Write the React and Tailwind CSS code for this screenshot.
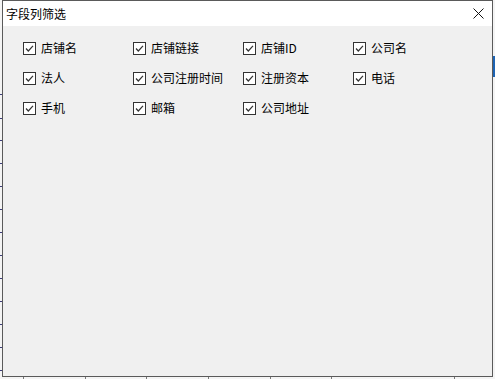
import React from 'react';

// Campos exibidos no diálogo, em ordem de linha
const campos = [
  '店铺名', '店铺链接', '店铺ID', '公司名',
  '法人', '公司注册时间', '注册资本', '电话',
  '手机', '邮箱', '公司地址',
];

const Caixa = () => (
  <svg width="13" height="13" viewBox="0 0 13 13" className="shrink-0">
    <rect x="0.5" y="0.5" width="12" height="12" fill="#ffffff" stroke="#333333" />
    <path d="M3 6.5 L5.3 9 L10 3.8" fill="none" stroke="#333333" strokeWidth="1.2" />
  </svg>
);

const Campo = ({ nome }) => (
  <label className="flex items-center gap-[5px] h-[30px] text-[12px] text-black">
    <Caixa />
    <span>{nome}</span>
  </label>
);

export default function App() {
  return (
    <div
      className="relative w-[495px] h-[379px] bg-[#f4f4f4] overflow-hidden"
      style={{ fontFamily: '"Noto Sans CJK SC", "Microsoft YaHei", sans-serif' }}
    >
      {/* fundo: aplicação por trás do diálogo */}
      <div className="absolute right-0 top-[56px] w-[3px] h-[21px] bg-[#1e64b4]" />
      {[94, 118, 140, 163, 186, 209, 232, 255, 278, 301, 324, 347, 370].map((y) => (
        <div key={y} className="absolute left-0 w-[2px] h-px bg-[#3c3c78]" style={{ top: y }} />
      ))}
      {[23, 85, 146, 208, 270, 331, 454].map((x) => (
        <div key={x} className="absolute bottom-0 w-px h-[2px] bg-[#777]" style={{ left: x }} />
      ))}

      {/* diálogo */}
      <div className="absolute left-[2px] top-0 w-[491px] h-[377px] border border-[#5a5a5a] bg-[#f0f0f0] flex flex-col">
        <div className="h-[25px] bg-white flex items-center justify-between pl-[3px] pr-[8px]">
          <span className="text-[12px] text-black">字段列筛选</span>
          <svg width="11" height="11" viewBox="0 0 11 11">
            <path d="M0.5 0.5 L10.5 10.5 M10.5 0.5 L0.5 10.5" stroke="#111" strokeWidth="1" />
          </svg>
        </div>
        <div className="grid grid-cols-[110px_110px_110px_110px] pl-[20px] pt-[7px]">
          {campos.map((c) => (
            <Campo key={c} nome={c} />
          ))}
        </div>
      </div>
    </div>
  );
}
